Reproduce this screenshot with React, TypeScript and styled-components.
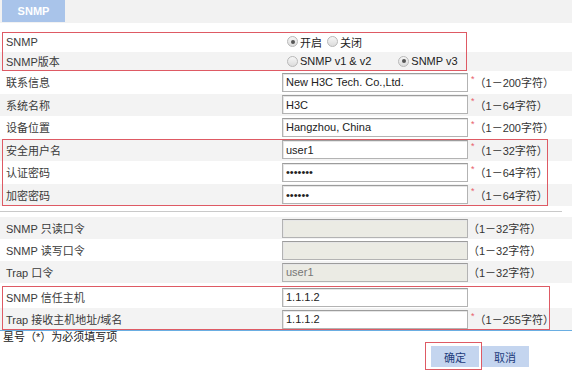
import React from "react";
import styled, { createGlobalStyle } from "styled-components";

const GlobalStyle = createGlobalStyle`
    html, body {
        margin: 0;
        padding: 0;
        background: #fff;
    }
    body {
        font-family: "Liberation Sans", "Noto Sans CJK SC", sans-serif;
        font-size: 11px;
        color: #333;
    }
`;

const Page = styled.div`
    width: 572px;
    height: 374px;
    overflow: hidden;
`;

const TabBar = styled.div`
    display: flex;
    height: 23px;
    padding-left: 2px;
    background: #f2f2f2;
`;

const Tab = styled.div`
    display: flex;
    align-items: center;
    justify-content: center;
    width: 63px;
    height: 22px;
    background: #a9c4ea;
    color: #fff;
    font-weight: bold;
`;

const Form = styled.div`
    display: flex;
    flex-direction: column;
    padding-top: 9px;
`;

// red annotation frame drawn over a block of rows
const Group = styled.div<{ $frame: number; $top?: number }>`
    position: relative;
    margin-top: ${(p) => p.$top || 0}px;

    &::after {
        content: "";
        position: absolute;
        left: 2px;
        top: 0;
        bottom: 0;
        width: ${(p) => p.$frame}px;
        border: 1px solid #de5a64;
        box-sizing: border-box;
        pointer-events: none;
    }
`;

const Row = styled.div<{ $alt?: boolean; $h: number }>`
    display: flex;
    align-items: center;
    height: ${(p) => p.$h}px;
    background: ${(p) => (p.$alt ? "#f3f3f3" : "#fff")};
`;

const Label = styled.div`
    width: 276px;
    padding-left: 6px;
    color: #3a3a3a;
`;

const Field = styled.div`
    display: flex;
    align-items: center;
`;

const TextInput = styled.input`
    width: 186px;
    height: 19px;
    box-sizing: border-box;
    padding: 0 3px;
    border: 1px solid #b3b3b3;
    border-top-color: #9c9c9c;
    box-shadow: inset 1px 1px 0 #e6e6e6;
    font-family: "Liberation Sans", "Noto Sans CJK SC", sans-serif;
    font-size: 11px;
    color: #222;
    background: #fff;
    outline: none;

    &:disabled {
        background: #ebebe4;
        color: #777;
    }
`;

const Star = styled.span`
    color: #e8606a;
    font-size: 9px;
    margin-left: 3px;
    align-self: flex-start;
    line-height: 12px;
`;

const Hint = styled.span`
    color: #333;
    white-space: nowrap;
`;

const RadioOption = styled.label<{ $after: number }>`
    display: flex;
    align-items: center;
    margin-right: ${(p) => p.$after}px;
    color: #222;
`;

const RadioDot = styled.span<{ $on?: boolean }>`
    position: relative;
    width: 9px;
    height: 9px;
    margin-right: 2px;
    border: 1px solid #b8b8b8;
    border-radius: 50%;
    background: linear-gradient(#f6f6f6, #dcdcdc);

    &::after {
        content: "";
        display: ${(p) => (p.$on ? "block" : "none")};
        position: absolute;
        left: 2.5px;
        top: 2.5px;
        width: 4px;
        height: 4px;
        border-radius: 50%;
        background: #555;
    }
`;

const Radios = styled.div`
    display: flex;
    align-items: center;
    padding-left: 5px;
`;

const Divider = styled.div`
    height: 1px;
    width: 562px;
    margin: 5px 0;
    background: #c9c9c9;
`;

const BlueLine = styled.div`
    height: 1px;
    background: #6aaee2;
`;

const Note = styled.div`
    padding-left: 3px;
    line-height: 12px;
    color: #222;
`;

const Buttons = styled.div`
    display: flex;
    gap: 2px;
    padding: 3px 0 0 431px;
`;

const Focused = styled.div`
    position: relative;

    &::after {
        content: "";
        position: absolute;
        left: -6px;
        right: -3px;
        top: -4px;
        bottom: -3px;
        border: 1px solid #de5a64;
        pointer-events: none;
    }
`;

const Button = styled.button`
    width: 48px;
    height: 21px;
    border: none;
    background: #c4d5ef;
    color: #1d3c7c;
    font-family: "Liberation Sans", "Noto Sans CJK SC", sans-serif;
    font-size: 11px;
    padding: 0;
    cursor: pointer;
`;

interface FieldRow {
    label: string;
    value: string;
    hint: string;
    password?: boolean;
    disabled?: boolean;
    required?: boolean;
}

const infoRows: FieldRow[] = [
    { label: "联系信息", value: "New H3C Tech. Co.,Ltd.", hint: "（1－200字符）", required: true },
    { label: "系统名称", value: "H3C", hint: "（1－64字符）", required: true },
    { label: "设备位置", value: "Hangzhou, China", hint: "（1－200字符）", required: true },
];

const userRows: FieldRow[] = [
    { label: "安全用户名", value: "user1", hint: "（1－32字符）", required: true },
    { label: "认证密码", value: "1234567", hint: "（1－64字符）", required: true, password: true },
    { label: "加密密码", value: "123456", hint: "（1－64字符）", required: true, password: true },
];

const communityRows: FieldRow[] = [
    { label: "SNMP 只读口令", value: "", hint: "（1－32字符）", disabled: true },
    { label: "SNMP 读写口令", value: "", hint: "（1－32字符）", disabled: true },
    { label: "Trap 口令", value: "user1", hint: "（1－32字符）", disabled: true },
];

const trapRows: FieldRow[] = [
    { label: "SNMP 信任主机", value: "1.1.1.2", hint: "" },
    { label: "Trap 接收主机地址/域名", value: "1.1.1.2", hint: "（1－255字符）", required: true },
];

const InputRow = ({ row, alt, h }: { row: FieldRow; alt: boolean; h: number }) => (
    <Row $alt={alt} $h={h}>
        <Label>{row.label}</Label>
        <Field>
            <TextInput
                type={row.password ? "password" : "text"}
                defaultValue={row.value}
                disabled={row.disabled}
            />
            {row.required && <Star>*</Star>}
            {row.hint && <Hint>{row.hint}</Hint>}
        </Field>
    </Row>
);

const App = () => {
    return (
        <Page>
            <GlobalStyle />
            <TabBar>
                <Tab>SNMP</Tab>
            </TabBar>
            <Form>
                <Group $frame={465}>
                    <Row $h={19.5}>
                        <Label>SNMP</Label>
                        <Radios>
                            <RadioOption $after={5}>
                                <RadioDot $on />
                                开启
                            </RadioOption>
                            <RadioOption $after={0}>
                                <RadioDot />
                                关闭
                            </RadioOption>
                        </Radios>
                    </Row>
                    <Row $alt $h={19.5}>
                        <Label>SNMP版本</Label>
                        <Radios>
                            <RadioOption $after={27}>
                                <RadioDot />
                                SNMP v1 &amp; v2
                            </RadioOption>
                            <RadioOption $after={0}>
                                <RadioDot $on />
                                SNMP v3
                            </RadioOption>
                        </Radios>
                    </Row>
                </Group>

                {infoRows.map((r, i) => (
                    <InputRow key={r.label} row={r} alt={i % 2 === 1} h={22.5} />
                ))}

                <Group $frame={546}>
                    {userRows.map((r, i) => (
                        <InputRow key={r.label} row={r} alt={i % 2 === 0} h={22.5} />
                    ))}
                </Group>

                <Divider />

                {communityRows.map((r, i) => (
                    <InputRow key={r.label} row={r} alt={i % 2 === 0} h={22} />
                ))}

                <Group $frame={548} $top={3}>
                    {trapRows.map((r, i) => (
                        <InputRow key={r.label} row={r} alt={i % 2 === 1} h={22} />
                    ))}
                </Group>

                <BlueLine />
                <Note>星号（*）为必须填写项</Note>
                <Buttons>
                    <Focused>
                        <Button type="button">确定</Button>
                    </Focused>
                    <Button type="button">取消</Button>
                </Buttons>
            </Form>
        </Page>
    );
};

export default App;
